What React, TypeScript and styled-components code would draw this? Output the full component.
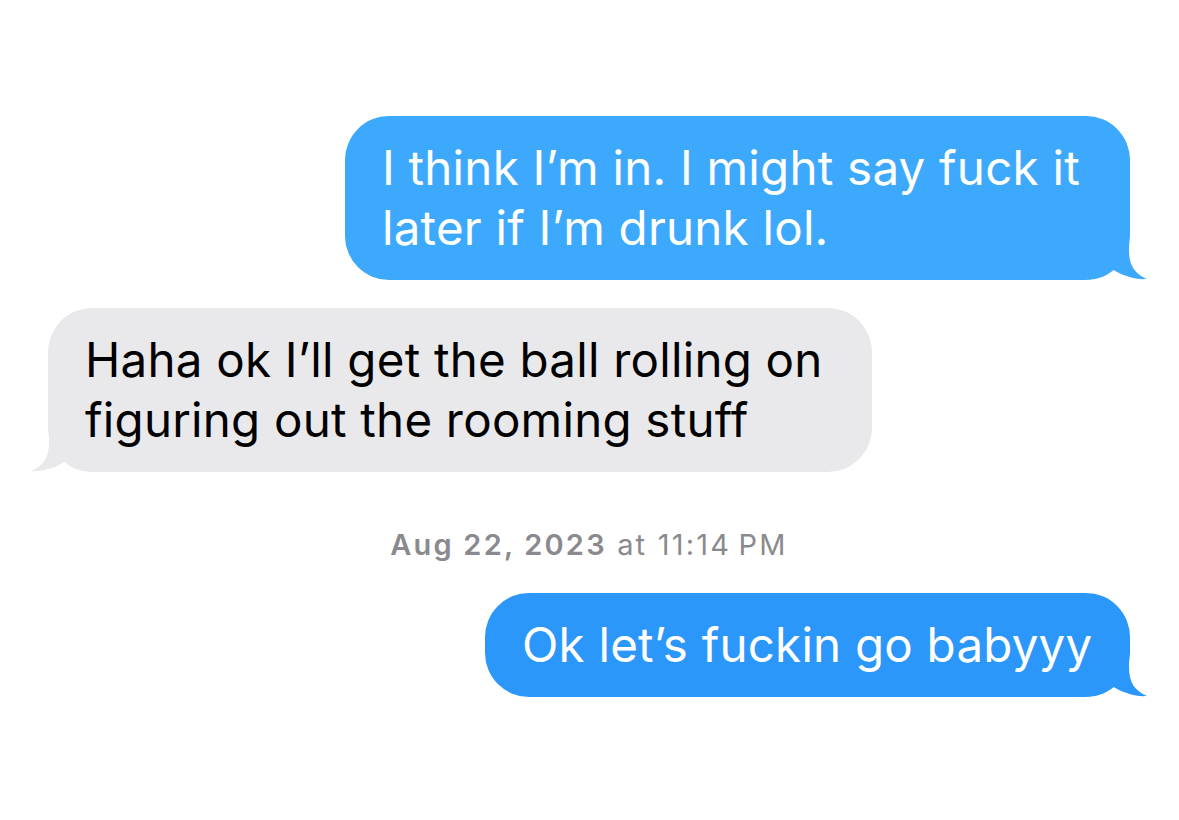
import React from "react";
import styled, { createGlobalStyle } from "styled-components";

const Global = createGlobalStyle`
  html, body { margin: 0; padding: 0; background: #ffffff; }
  body { font-family: Inter, "Noto Sans", "Liberation Sans", sans-serif; -webkit-font-smoothing: antialiased; }
`;

const Thread = styled.div`
  display: flex;
  flex-direction: column;
  padding: 116px 49px 0 48px;
  width: 1179px;
  height: 820px;
  box-sizing: border-box;
`;

const Row = styled.div<{ $side: "left" | "right"; $gap: number }>`
  display: flex;
  justify-content: ${(p) => (p.$side === "right" ? "flex-end" : "flex-start")};
  margin-top: ${(p) => p.$gap}px;
`;

const Bubble = styled.div<{ $side: "left" | "right"; $bg: string; $width: number }>`
  position: relative;
  width: ${(p) => p.$width}px;
  box-sizing: border-box;
  padding: 22px 37px;
  border-radius: 44px;
  background: ${(p) => p.$bg};
  color: ${(p) => (p.$side === "right" ? "#ffffff" : "#000000")};
  font-size: 47.5px;
  line-height: 60px;
  letter-spacing: 0.22px;
  white-space: nowrap;
`;

const Tail = styled.svg<{ $side: "left" | "right" }>`
  position: absolute;
  bottom: 0;
  width: 60px;
  height: 42px;
  ${(p) => (p.$side === "right" ? "right: -19px;" : "left: -19px; transform: scaleX(-1);")}
`;

const Stamp = styled.div`
  margin-top: 56px;
  text-align: center;
  font-size: 29px;
  line-height: 34px;
  color: #8a8a8e;
  letter-spacing: 2.2px;
`;

const StampDate = styled.span`
  font-weight: 600;
`;

type Side = "left" | "right";

const Message: React.FC<{
  side: Side;
  bg: string;
  width: number;
  gap: number;
  lines: string[];
}> = ({ side, bg, width, gap, lines }) => (
  <Row $side={side} $gap={gap}>
    <Bubble $side={side} $bg={bg} $width={width}>
      {lines.map((l, i) => (
        <div key={i}>{l}</div>
      ))}
      <Tail $side={side} viewBox="0 0 60 42">
        <path
          d="M0 0 L40 0 L40 12 C40 28 46 36 58 41 C48 42 32 38 20 29 C14 35 8 39 0 42 Z"
          fill={bg}
        />
      </Tail>
    </Bubble>
  </Row>
);

export default function App() {
  return (
    <>
      <Global />
      <Thread>
        <Message
          side="right"
          bg="#3da9fc"
          width={785}
          gap={0}
          lines={["I think I\u2019m in. I might say fuck it", "later if I\u2019m drunk lol."]}
        />
        <Message
          side="left"
          bg="#e9e9eb"
          width={824}
          gap={28}
          lines={["Haha ok I\u2019ll get the ball rolling on", "figuring out the rooming stuff"]}
        />
        <Stamp>
          <StampDate>Aug 22, 2023</StampDate> at 11:14&#8239;PM
        </Stamp>
        <Message
          side="right"
          bg="#2b97fb"
          width={645}
          gap={31}
          lines={["Ok let\u2019s fuckin go babyyy"]}
        />
      </Thread>
    </>
  );
}
